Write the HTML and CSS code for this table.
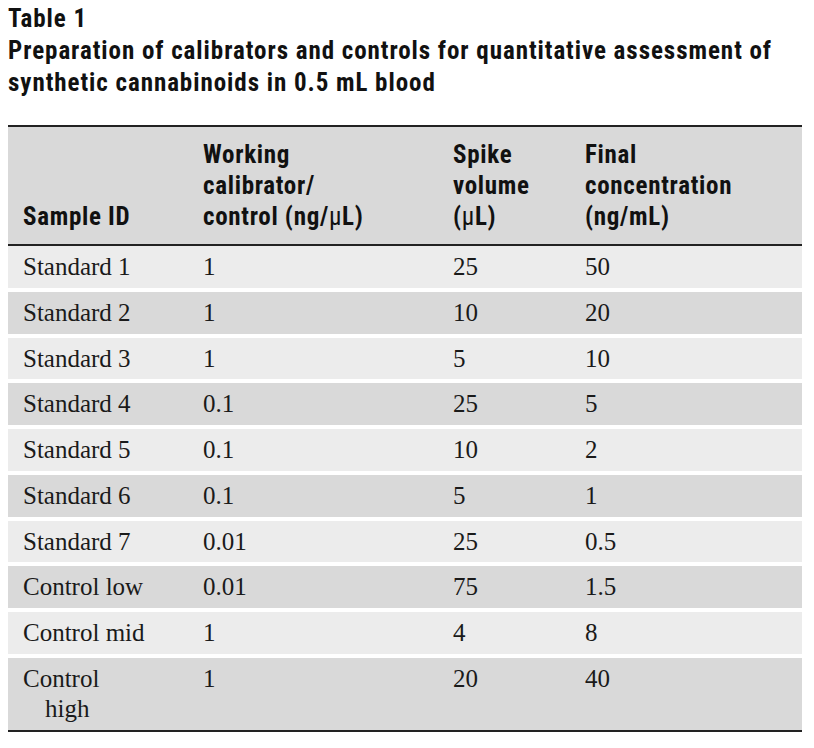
FILE: index.html
```html
<!DOCTYPE html>
<html lang="en">
<head>
<meta charset="utf-8">
<title>Table 1</title>
<link rel="stylesheet" href="styles.css">
</head>
<body>
<main class="page">
  <header class="caption">
    <div class="caption-label">Table 1</div>
    <h1 class="caption-title">Preparation of calibrators and controls for quantitative assessment of synthetic cannabinoids in 0.5 mL blood</h1>
  </header>
  <table class="data">
    <colgroup>
      <col class="c1">
      <col class="c2">
      <col class="c3">
      <col class="c4">
    </colgroup>
    <thead>
      <tr>
        <th>Sample ID</th>
        <th>Working<br>calibrator/<br>control (ng/<span class="mu">µ</span>L)</th>
        <th>Spike<br>volume<br>(<span class="mu">µ</span>L)</th>
        <th>Final<br>concentration<br>(ng/mL)</th>
      </tr>
    </thead>
    <tbody>
      <tr class="light"><td class="id">Standard 1</td><td>1</td><td>25</td><td>50</td></tr>
      <tr class="dark"><td class="id">Standard 2</td><td>1</td><td>10</td><td>20</td></tr>
      <tr class="light"><td class="id">Standard 3</td><td>1</td><td>5</td><td>10</td></tr>
      <tr class="dark"><td class="id">Standard 4</td><td>0.1</td><td>25</td><td>5</td></tr>
      <tr class="light"><td class="id">Standard 5</td><td>0.1</td><td>10</td><td>2</td></tr>
      <tr class="dark"><td class="id">Standard 6</td><td>0.1</td><td>5</td><td>1</td></tr>
      <tr class="light"><td class="id">Standard 7</td><td>0.01</td><td>25</td><td>0.5</td></tr>
      <tr class="dark"><td class="id">Control low</td><td>0.01</td><td>75</td><td>1.5</td></tr>
      <tr class="light"><td class="id">Control mid</td><td>1</td><td>4</td><td>8</td></tr>
      <tr class="dark last"><td class="id">Control<br>high</td><td>1</td><td>20</td><td>40</td></tr>
    </tbody>
  </table>
</main>
</body>
</html>
```

FILE: styles.css
```css
html, body {
  margin: 0;
  padding: 0;
  background: #ffffff;
}

.page {
  padding: 3px 0 0 8px;
  width: 794px;
}

.caption {
  font-family: "Liberation Sans Narrow", "Roboto Condensed", "DejaVu Sans Condensed", "Liberation Sans", sans-serif;
  font-stretch: condensed;
  font-weight: bold;
  font-size: 25px;
  letter-spacing: 0.95px;
  line-height: 32px;
  color: #111111;
  margin: 0 0 26px 0;
}

.caption-label {
  margin: 0;
}

.caption-title {
  margin: 0;
  font-size: inherit;
  font-weight: inherit;
  line-height: inherit;
}

.data {
  width: 794px;
  table-layout: fixed;
  border-collapse: separate;
  border-spacing: 0;
}

.c1 { width: 180px; }
.c2 { width: 250px; }
.c3 { width: 132px; }
.c4 { width: 232px; }

.data th {
  font-family: "Liberation Sans Narrow", "Roboto Condensed", "DejaVu Sans Condensed", "Liberation Sans", sans-serif;
  font-stretch: condensed;
  font-weight: bold;
  font-size: 25px;
  letter-spacing: 0.7px;
  line-height: 31px;
  color: #111111;
  text-align: left;
  vertical-align: bottom;
  background: #d9d9d9;
  padding: 12px 0 12px 15px;
  border-top: 2px solid #222222;
  border-bottom: 2px solid #222222;
}

.mu {
  font-weight: normal;
}

.data td {
  font-family: "Liberation Serif", "DejaVu Serif", serif;
  font-size: 25px;
  line-height: 30px;
  color: #1a1a1a;
  text-align: left;
  vertical-align: top;
  padding: 6px 0 5.75px 15px;
  border-bottom: 4px solid #ffffff;
}

.data td.id {
  padding-left: 37px;
  text-indent: -22px;
}

.light td { background: #ececec; }
.dark td { background: #d9d9d9; }

.data tr.last td {
  border-bottom: 2px solid #222222;
}
```
